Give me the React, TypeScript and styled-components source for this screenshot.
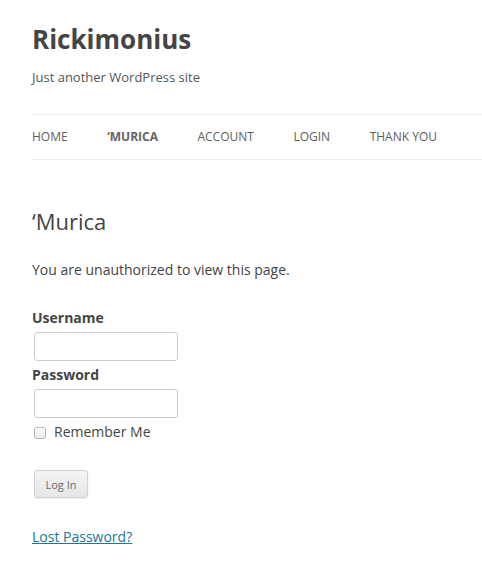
import styled, { createGlobalStyle } from "styled-components";

const GlobalStyle = createGlobalStyle`
  html, body {
    margin: 0;
    padding: 0;
    background: #fff;
  }
  body {
    font-family: "Open Sans", "Liberation Sans", Arial, sans-serif;
    color: #444;
  }
  * {
    box-sizing: border-box;
  }
`;

const navItems = [
  { label: "Home", current: false },
  { label: "\u2018Murica", current: true },
  { label: "Account", current: false },
  { label: "Login", current: false },
  { label: "Thank You", current: false },
];

export default function App() {
  return (
    <>
      <GlobalStyle />
      <Page>
        <Header>
          <SiteTitle>Rickimonius</SiteTitle>
          <Tagline>Just another WordPress site</Tagline>
        </Header>
        <Nav>
          <NavList>
            {navItems.map((item) => (
              <NavItem key={item.label} current={item.current}>
                {item.label}
              </NavItem>
            ))}
          </NavList>
        </Nav>
        <Article>
          <EntryTitle>{"\u2018Murica"}</EntryTitle>
          <Text>You are unauthorized to view this page.</Text>
          <LoginForm onSubmit={(e) => e.preventDefault()}>
            <Label htmlFor="user_login">Username</Label>
            <Input id="user_login" type="text" />
            <Label htmlFor="user_pass">Password</Label>
            <Input id="user_pass" type="password" />
            <Remember>
              <Checkbox type="checkbox" />
              Remember Me
            </Remember>
            <SubmitButton type="submit">Log In</SubmitButton>
          </LoginForm>
          <LostLink href="#">Lost Password?</LostLink>
        </Article>
      </Page>
    </>
  );
}

const Page = styled.div`
  width: 482px;
  padding-left: 32px;
  padding-top: 21px;
`;

const Header = styled.header`
  display: flex;
  flex-direction: column;
`;

const SiteTitle = styled.h1`
  margin: 0;
  font-size: 26px;
  line-height: 36px;
  font-weight: 700;
  color: #444;
`;

const Tagline = styled.h2`
  margin: 9px 0 0;
  font-size: 13px;
  line-height: 22px;
  font-weight: 400;
  color: #555;
`;

const Nav = styled.nav`
  margin-top: 26px;
  border-top: 1px solid #ededed;
  border-bottom: 1px solid #ededed;
`;

const NavList = styled.ul`
  display: flex;
  gap: 39.5px;
  margin: 0;
  padding: 1px 0 1px;
  list-style: none;
  line-height: 42px;
`;

const NavItem = styled.li<{ current: boolean }>`
  font-size: 12px;
  text-transform: uppercase;
  color: ${(p) => (p.current ? "#636363" : "#5e5e5e")};
  font-weight: ${(p) => (p.current ? 700 : 400)};
`;

const Article = styled.article`
  display: flex;
  flex-direction: column;
  align-items: flex-start;
`;

const EntryTitle = styled.h1`
  margin: 46px 0 0;
  font-size: 22px;
  line-height: 30px;
  font-weight: 400;
  color: #444;
`;

const Text = styled.p`
  margin: 22px 0 0;
  font-size: 14px;
  line-height: 24px;
`;

const LoginForm = styled.form`
  display: flex;
  flex-direction: column;
  align-items: flex-start;
  margin-top: 24px;
`;

const Label = styled.label`
  font-size: 14px;
  line-height: 24px;
  font-weight: 700;
  color: #444;
  & + input {
    margin-top: 2px;
  }
  input + & {
    margin-top: 2px;
  }
`;

const Input = styled.input`
  width: 144px;
  height: 29px;
  margin-left: 2px;
  padding: 6px;
  border: 1px solid #ccc;
  border-radius: 3px;
  font-family: inherit;
  font-size: 14px;
  color: #444;
  outline: none;
`;

const Remember = styled.label`
  display: flex;
  align-items: center;
  gap: 8px;
  margin-top: 2px;
  font-size: 14px;
  line-height: 24px;
  color: #444;
`;

const Checkbox = styled.input`
  appearance: none;
  width: 12px;
  height: 12px;
  margin: 2px 0 0 2px;
  border: 1px solid #b4b4b4;
  border-radius: 3px;
  background: linear-gradient(#fff, #ececec);
`;

const SubmitButton = styled.button`
  margin: 26px 0 0 2px;
  width: 54px;
  height: 28px;
  padding: 0;
  font-family: inherit;
  font-size: 11px;
  color: #6a6a6a;
  background: linear-gradient(#f4f4f4, #e6e6e6);
  border: 1px solid #d2d2d2;
  border-radius: 3px;
  box-shadow: 0 1px 2px rgba(64, 64, 64, 0.1);
`;

const LostLink = styled.a`
  margin-top: 27px;
  font-size: 14px;
  line-height: 24px;
  color: #21759b;
  text-decoration: underline;
`;
